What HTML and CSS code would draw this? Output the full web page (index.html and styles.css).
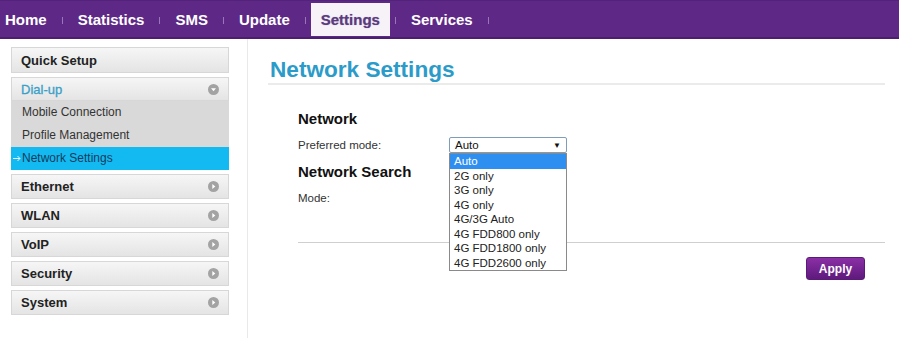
FILE: index.html
```html
<!DOCTYPE html>
<html lang="en">
<head>
  <meta charset="UTF-8" />
  <title>Network Settings</title>
  <link rel="stylesheet" href="styles.css">
</head>
<body>

  <!-- top menu -->
  <div class="topbar">
    <a class="tab first">Home</a>
    <span class="sep"></span>
    <a class="tab">Statistics</a>
    <span class="sep"></span>
    <a class="tab">SMS</a>
    <span class="sep"></span>
    <a class="tab">Update</a>
    <span class="sep"></span>
    <a class="tab active">Settings</a>
    <span class="sep"></span>
    <a class="tab">Services</a>
    <span class="sep"></span>
  </div>

  <div class="main">
    <div class="sidebar">
      <div class="menu-item">Quick Setup</div>

      <div class="menu-group">
        <div class="menu-item open">Dial-up
          <svg class="arrow" width="11" height="11" viewBox="0 0 11 11"><circle cx="5.5" cy="5.5" r="5.5" fill="#a3a3a3"/><path d="M3 4.2h5L5.5 7.2z" fill="#fff"/></svg>
        </div>
        <div class="sub-item">Mobile Connection</div>
        <div class="sub-item">Profile Management</div>
        <div class="sub-item current">
          <svg class="pointer" width="9" height="7" viewBox="0 0 9 7"><path d="M0 3.5h7M4.5 1l2.5 2.5L4.5 6" stroke="#e6f6ff" stroke-width="1" fill="none"/></svg>
          Network Settings
        </div>
      </div>

      <div class="menu-item">Ethernet
        <svg class="arrow" width="11" height="11" viewBox="0 0 11 11"><circle cx="5.5" cy="5.5" r="5.5" fill="#a3a3a3"/><path d="M4.3 3v5l3-2.5z" fill="#fff"/></svg>
      </div>
      <div class="menu-item">WLAN
        <svg class="arrow" width="11" height="11" viewBox="0 0 11 11"><circle cx="5.5" cy="5.5" r="5.5" fill="#a3a3a3"/><path d="M4.3 3v5l3-2.5z" fill="#fff"/></svg>
      </div>
      <div class="menu-item">VoIP
        <svg class="arrow" width="11" height="11" viewBox="0 0 11 11"><circle cx="5.5" cy="5.5" r="5.5" fill="#a3a3a3"/><path d="M4.3 3v5l3-2.5z" fill="#fff"/></svg>
      </div>
      <div class="menu-item">Security
        <svg class="arrow" width="11" height="11" viewBox="0 0 11 11"><circle cx="5.5" cy="5.5" r="5.5" fill="#a3a3a3"/><path d="M4.3 3v5l3-2.5z" fill="#fff"/></svg>
      </div>
      <div class="menu-item">System
        <svg class="arrow" width="11" height="11" viewBox="0 0 11 11"><circle cx="5.5" cy="5.5" r="5.5" fill="#a3a3a3"/><path d="M4.3 3v5l3-2.5z" fill="#fff"/></svg>
      </div>
    </div>

    <div class="content">
      <h1 class="page-title">Network Settings</h1>

      <div class="form">
        <h2>Network</h2>
        <div class="row">
          <label>Preferred mode:</label>
          <div class="select">
            <span>Auto</span>
            <span class="caret">&#9660;</span>
            <ul class="options">
              <li class="selected">Auto</li>
              <li>2G only</li>
              <li>3G only</li>
              <li>4G only</li>
              <li>4G/3G Auto</li>
              <li>4G FDD800 only</li>
              <li>4G FDD1800 only</li>
              <li>4G FDD2600 only</li>
            </ul>
          </div>
        </div>

        <h2 class="second">Network Search</h2>
        <div class="row">
          <label>Mode:</label>
        </div>

        <div class="actions">
          <button class="btn">Apply</button>
        </div>
      </div>
    </div>
  </div>

</body>
</html>
```

FILE: styles.css
```css
* {
  margin: 0;
  padding: 0;
  box-sizing: border-box;
}

body, html {
  height: 100%;
  font-family: "Liberation Sans", Arial, sans-serif;
  background: #fff;
  overflow: hidden;
}

/* top menu */
.topbar {
  display: flex;
  align-items: center;
  height: 39px;
  background: #5e2986;
  border-top: 1px solid #53237a;
  border-bottom: 2px solid #4b1f6e;
}

.tab {
  display: flex;
  align-items: center;
  height: 33px;
  padding: 0 10px;
  font-size: 15px;
  font-weight: bold;
  color: #fff;
  margin-top: 1px;
}

.tab.first {
  padding-left: 5px;
}

.tab.active {
  background: #f7f2f8;
  color: #5b3b7e;
  text-shadow: 0 0 1px #9a86b0;
}

.sep {
  width: 11px;
  height: 7px;
  margin-top: 2px;
  background: linear-gradient(#a889c4, #a889c4) center / 1px 100% no-repeat;
  opacity: 0.8;
}

.main {
  display: flex;
  height: calc(100% - 39px);
}

/* left menu */
.sidebar {
  width: 248px;
  padding: 8px 18px 0 11px;
  border-right: 1px solid #e9e9e9;
}

.menu-item {
  display: flex;
  align-items: center;
  justify-content: space-between;
  height: 25px;
  padding: 0 9px 0 9px;
  margin-bottom: 4px;
  font-size: 13px;
  font-weight: bold;
  color: #222;
  background: linear-gradient(#f6f6f6, #e4e4e4);
  border: 1px solid #d7d7d7;
}

.menu-item:first-child {
  height: 26px;
}

.menu-group {
  margin-bottom: 4px;
}

.menu-item.open {
  height: 24px;
  margin-bottom: 0;
  color: #3aa0c8;
  font-weight: normal;
  -webkit-text-stroke: 0.3px #3aa0c8;
}

.sub-item {
  height: 23px;
  line-height: 23px;
  padding-left: 11px;
  font-size: 12px;
  color: #333;
  background: #d9d9d9;
}

.sub-item.current {
  position: relative;
  background: #13baf2;
  color: #173b5c;
}

.pointer {
  position: absolute;
  left: 2px;
  top: 8px;
}

/* content */
.content {
  flex: 1;
  padding: 18px 14px 0 20px;
}

.page-title {
  height: 28px;
  padding-left: 2px;
  font-size: 22.6px;
  line-height: 26px;
  color: #2b9bc9;
  border-bottom: 2px solid #ebebeb;
}

.form {
  margin-left: 30px;
  padding-top: 25px;
}

h2 {
  font-size: 15px;
  line-height: 18px;
  color: #111;
  margin-bottom: 9px;
}

h2.second {
  margin-top: 10px;
}

.row {
  display: flex;
  align-items: center;
  height: 16px;
  font-size: 11.5px;
  color: #333;
}

.row label {
  width: 151px;
}

.select {
  position: relative;
  display: flex;
  justify-content: space-between;
  align-items: center;
  width: 118px;
  height: 16px;
  padding: 0 5px;
  border: 1px solid #7f9db9;
  border-radius: 2px;
  color: #111;
}

.caret {
  font-size: 8px;
}

.options {
  position: absolute;
  top: 15px;
  left: -1px;
  width: 118px;
  list-style: none;
  background: #fff;
  border: 1px solid #8a8a8a;
  z-index: 10;
}

.options li {
  height: 14.5px;
  line-height: 14.5px;
  padding-left: 4px;
  color: #222;
}

.options li.selected {
  background: #2f8ff0;
  color: #fff;
}

.actions {
  display: flex;
  justify-content: flex-end;
  margin-top: 36px;
  padding: 14px 20px 0 0;
  border-top: 1px solid #cfcfcf;
}

.btn {
  width: 59px;
  height: 23px;
  font-family: "Liberation Sans", Arial, sans-serif;
  font-size: 12px;
  font-weight: bold;
  color: #fff;
  background: linear-gradient(#8a2fa6, #5e1a7c);
  border: 1px solid #5a1a77;
  border-radius: 3px;
  cursor: pointer;
}
```
